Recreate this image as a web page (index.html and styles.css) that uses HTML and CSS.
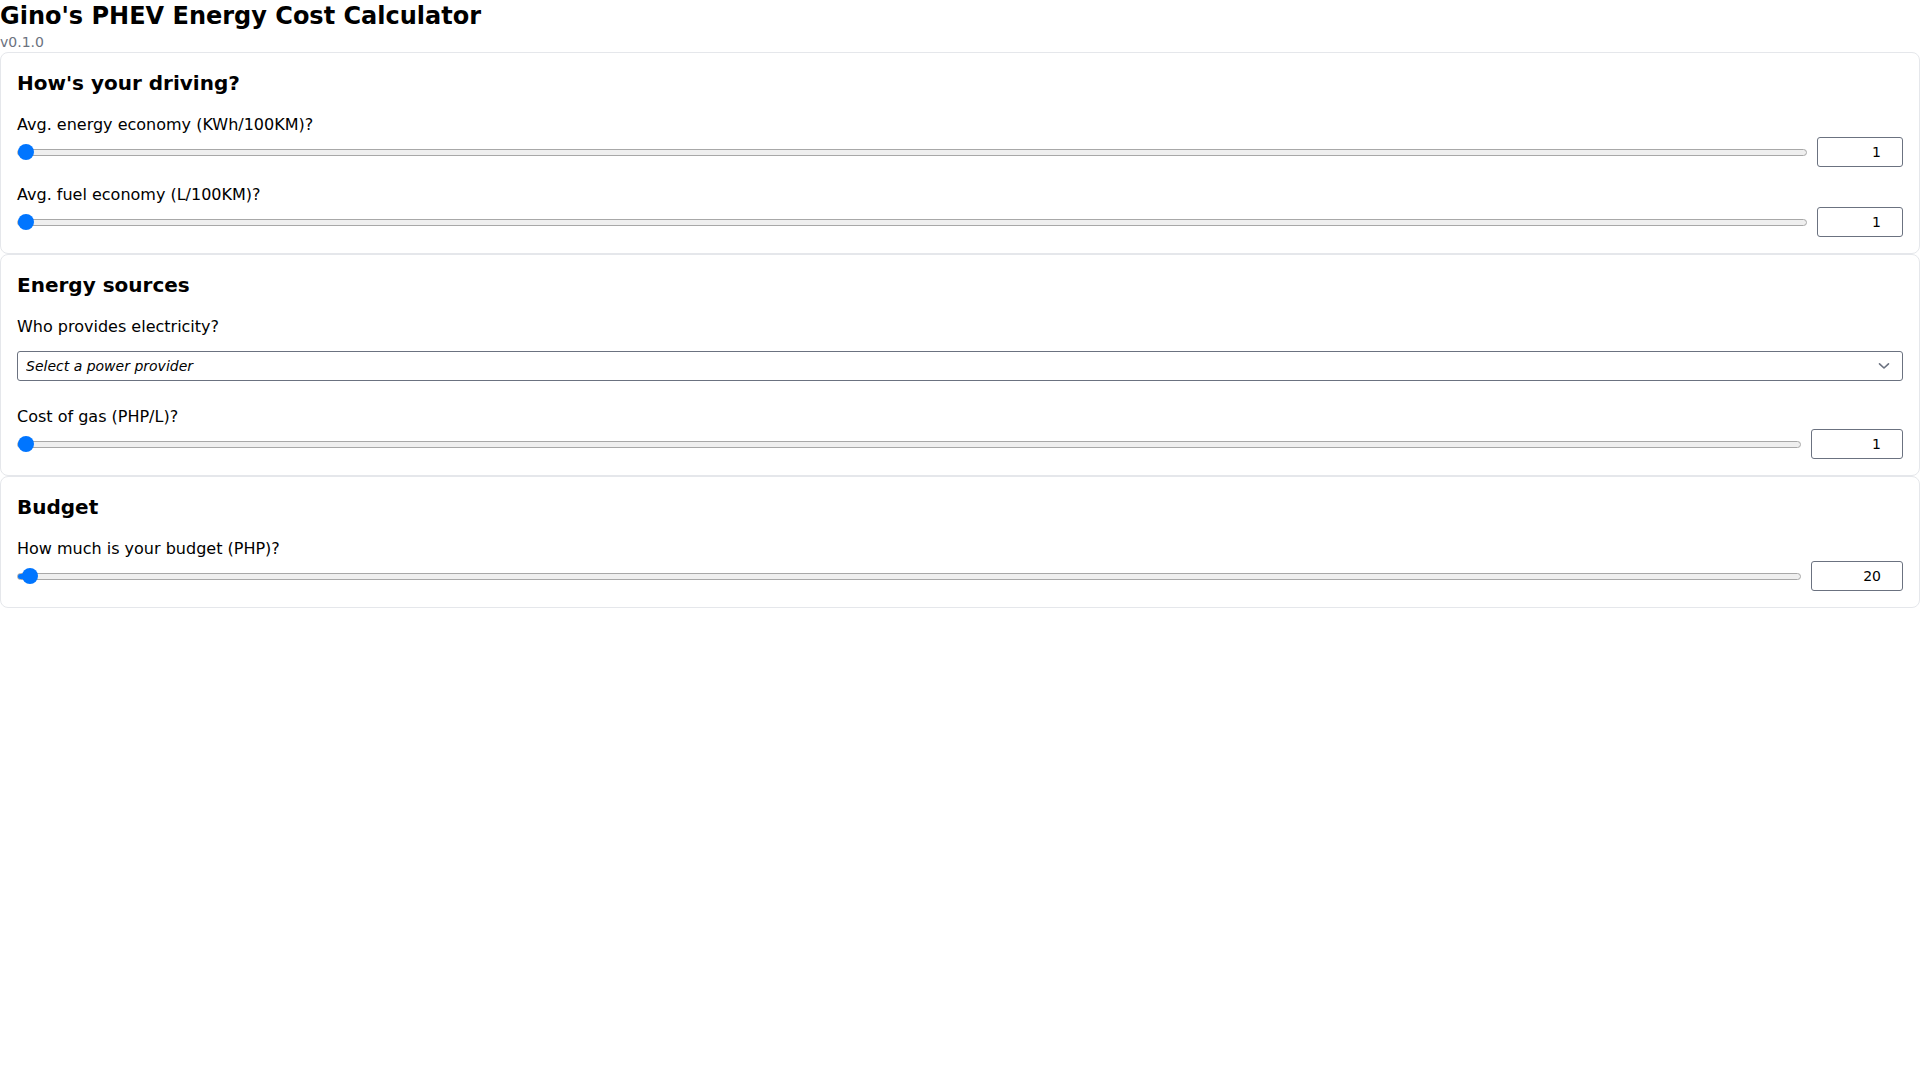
FILE: index.html
```html
<!DOCTYPE html>
<html lang="en">
<head>
<meta charset="utf-8">
<title>Gino's PHEV Energy Cost Calculator</title>
<link rel="stylesheet" href="styles.css">
</head>
<body>
<header class="header">
  <h1 class="title">Gino's PHEV Energy Cost Calculator</h1>
  <p class="version">v0.1.0</p>
</header>
<main class="cards">
  <section class="card">
    <h2 class="card-title">How's your driving?</h2>
    <div class="fields">
      <div class="field">
        <label class="label" for="ee">Avg. energy economy (KWh/100KM)?</label>
        <div class="slider-row">
          <input class="slider" id="ee" type="range" min="1" max="100" value="1" style="--p: 0">
          <input class="num num-sm" type="number" value="1">
        </div>
      </div>
      <div class="field">
        <label class="label" for="fe">Avg. fuel economy (L/100KM)?</label>
        <div class="slider-row">
          <input class="slider" id="fe" type="range" min="1" max="100" value="1" style="--p: 0">
          <input class="num num-sm" type="number" value="1">
        </div>
      </div>
    </div>
  </section>
  <section class="card">
    <h2 class="card-title">Energy sources</h2>
    <div class="fields">
      <div class="field">
        <label class="label" for="prov">Who provides electricity?</label>
        <div class="select-wrap">
          <select class="select" id="prov">
            <option>Select a power provider</option>
          </select>
          <svg class="chevron" width="12" height="8" viewBox="0 0 12 8" aria-hidden="true">
            <path d="M1.5 1.8 L6 6 L10.5 1.8" fill="none" stroke="#6b7280" stroke-width="1.6" stroke-linecap="round" stroke-linejoin="round"/>
          </svg>
        </div>
      </div>
      <div class="field">
        <label class="label" for="gas">Cost of gas (PHP/L)?</label>
        <div class="slider-row">
          <input class="slider" id="gas" type="range" min="1" max="200" value="1" style="--p: 0">
          <input class="num num-md" type="number" value="1">
        </div>
      </div>
    </div>
  </section>
  <section class="card">
    <h2 class="card-title">Budget</h2>
    <div class="fields">
      <div class="field">
        <label class="label" for="bud">How much is your budget (PHP)?</label>
        <div class="slider-row">
          <input class="slider" id="bud" type="range" min="0" max="10000" value="20" style="--p: 0.002">
          <input class="num num-md" type="number" value="20">
        </div>
      </div>
    </div>
  </section>
</main>
</body>
</html>
```
FILE: styles.css
```css
* { box-sizing: border-box; }

body {
  margin: 0;
  font-family: "DejaVu Sans", "Noto Sans", sans-serif;
  color: #000;
  background: #fff;
}

.header { display: flex; flex-direction: column; }

.title {
  margin: 0;
  font-size: 24px;
  line-height: 32px;
  font-weight: 700;
}

.version {
  margin: 0;
  font-size: 14px;
  line-height: 20px;
  color: #6b7280;
}

.cards {
  display: flex;
  flex-direction: column;
  gap: 0;
}

.card {
  border: 1px solid #e5e7eb;
  border-radius: 8px;
  padding: 16px;
}

.card-title {
  margin: 0 0 16px;
  font-size: 20px;
  line-height: 28px;
  font-weight: 700;
}

.fields {
  display: flex;
  flex-direction: column;
  gap: 16px;
}

.field { display: flex; flex-direction: column; }

.label {
  display: block;
  font-size: 16px;
  line-height: 24px;
}

.slider-row {
  display: flex;
  align-items: center;
  gap: 10px;
  height: 30px;
}

.slider {
  --p: 0;
  flex: 1;
  min-width: 0;
  height: 16px;
  margin: 0;
  padding: 0;
  background: transparent;
  -webkit-appearance: none;
  appearance: none;
}

.slider::-webkit-slider-runnable-track {
  box-sizing: border-box;
  height: 7px;
  border: 1px solid #a8a8a8;
  border-radius: 4px;
  background: linear-gradient(to right, #0075ff calc(8px + var(--p) * (100% - 16px)), #efefef 0);
}

.slider::-webkit-slider-thumb {
  -webkit-appearance: none;
  appearance: none;
  width: 16px;
  height: 16px;
  margin-top: -5.5px;
  border: none;
  border-radius: 50%;
  background: #0075ff;
}

.num {
  height: 30px;
  margin: 0;
  padding: 0 6px 0 4px;
  border: 1px solid #6b7280;
  border-radius: 3px;
  font-family: "DejaVu Sans", sans-serif;
  font-size: 14px;
  text-align: right;
  color: #000;
  background: #fff;
}

.num-sm { width: 86px; }
.num-md { width: 92px; }

.select-wrap {
  position: relative;
  margin: 12px 0 8px;
}

.select {
  display: block;
  width: 100%;
  height: 30px;
  margin: 0;
  padding: 0 32px 0 8px;
  border: 1px solid #6b7280;
  border-radius: 3px;
  background: #fff;
  font-family: "DejaVu Sans", sans-serif;
  font-size: 14px;
  font-style: italic;
  color: #000;
  appearance: none;
  -webkit-appearance: none;
}

.chevron {
  position: absolute;
  right: 13px;
  top: 11px;
  pointer-events: none;
}
```
